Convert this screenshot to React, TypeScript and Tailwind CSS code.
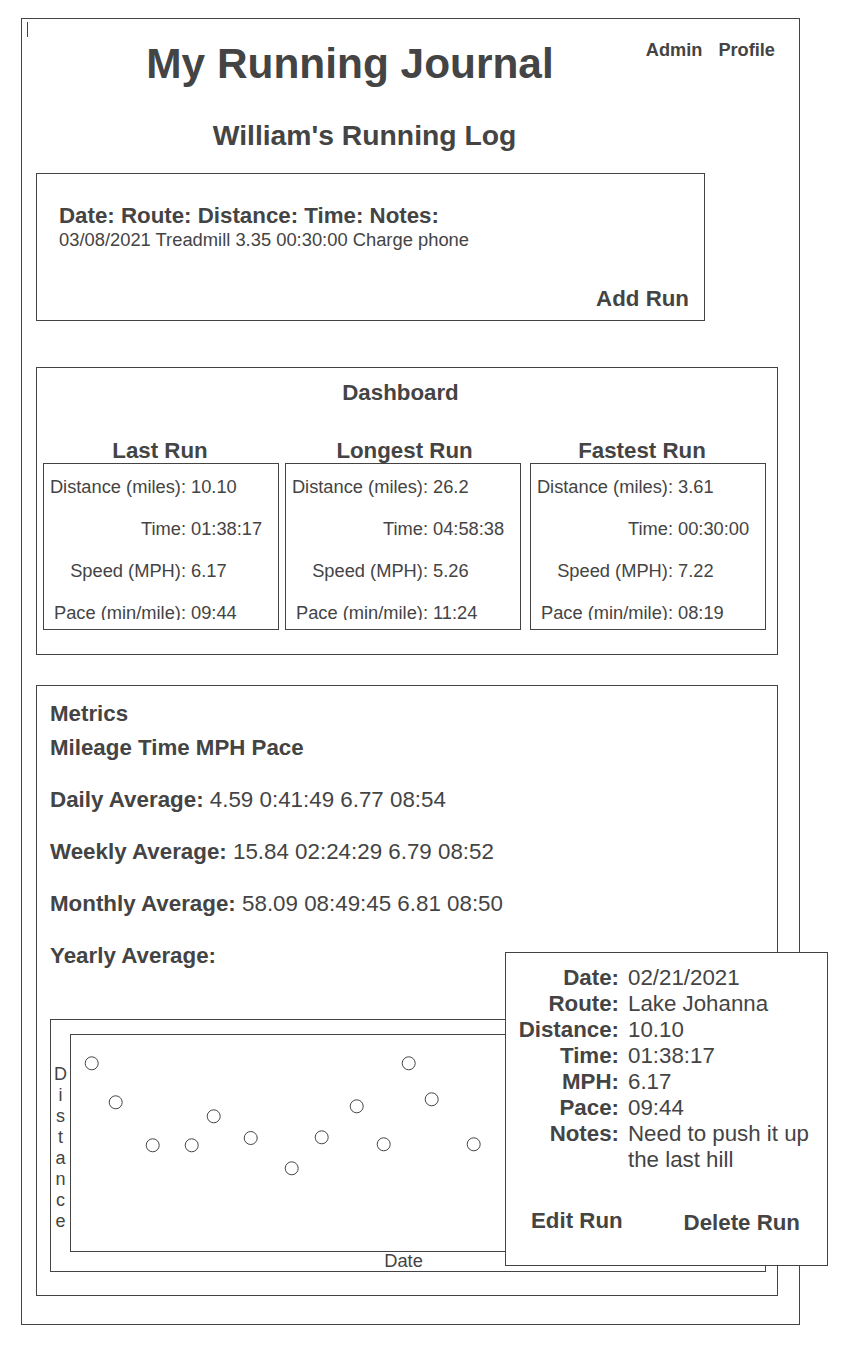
import React from 'react'

// Scatter points, relative to the plot's inner top-left corner
const points: Array<[number, number]> = [
  [20.7, 28.3],
  [44.7, 67.3],
  [81.7, 110.3],
  [120.7, 110.3],
  [142.7, 81.3],
  [179.7, 103],
  [220.7, 133.3],
  [250.7, 102.3],
  [285.7, 71.3],
  [312.7, 109.3],
  [337.7, 28.3],
  [360.7, 64.3],
  [402.7, 109.3],
]

const highlights = [
  {
    title: 'Last Run',
    headerClass: 'pr-[2px]',
    gapClass: '',
    rows: [
      ['Distance (miles):', '10.10'],
      ['Time:', '01:38:17'],
      ['Speed (MPH):', '6.17'],
      ['Pace (min/mile):', '09:44'],
    ],
  },
  {
    title: 'Longest Run',
    headerClass: 'pl-[3px]',
    gapClass: 'ml-[6px]',
    rows: [
      ['Distance (miles):', '26.2'],
      ['Time:', '04:58:38'],
      ['Speed (MPH):', '5.26'],
      ['Pace (min/mile):', '11:24'],
    ],
  },
  {
    title: 'Fastest Run',
    headerClass: 'pr-[12px]',
    gapClass: 'ml-[9px]',
    rows: [
      ['Distance (miles):', '3.61'],
      ['Time:', '00:30:00'],
      ['Speed (MPH):', '7.22'],
      ['Pace (min/mile):', '08:19'],
    ],
  },
]

const averages = [
  ['Daily Average:', '4.59 0:41:49 6.77 08:54'],
  ['Weekly Average:', '15.84 02:24:29 6.79 08:52'],
  ['Monthly Average:', '58.09 08:49:45 6.81 08:50'],
  ['Yearly Average:', ''],
]

const runDetail = [
  ['Date:', '02/21/2021'],
  ['Route:', 'Lake Johanna'],
  ['Distance:', '10.10'],
  ['Time:', '01:38:17'],
  ['MPH:', '6.17'],
  ['Pace:', '09:44'],
  ['Notes:', 'Need to push it up the last hill'],
]

function HighlightCard({ item }: { item: (typeof highlights)[number] }) {
  return (
    <div className={`flex w-[236px] flex-col ${item.gapClass}`}>
      <h3 className={`text-center text-[22.3px] font-bold leading-[24px] ${item.headerClass}`}>
        {item.title}
      </h3>
      <div className="h-[167px] border border-[#444]">
        <div className="h-[156px] overflow-hidden pt-[2px]">
          {item.rows.map(([label, value]) => (
            <div key={label} className="grid grid-cols-[142px_1fr] text-[18.3px] leading-[42px]">
              <span className="text-right whitespace-nowrap">{label}</span>
              <span className="pl-[5px] whitespace-nowrap">{value}</span>
            </div>
          ))}
        </div>
      </div>
    </div>
  )
}

export default function App() {
  return (
    <div className="min-h-screen bg-white font-['Liberation_Sans',Arial,sans-serif] text-[#444]">
      <div className="relative ml-[21px] mt-[18px] h-[1307px] w-[779px] border border-[#444]">
        {/* Cursor */}
        <div className="absolute left-[5px] top-[3px] h-[15px] w-px bg-[#444]" />

        {/* Header */}
        <div className="grid grid-cols-[600px_1fr]">
          <h1 className="mt-[21px] pl-[56px] text-center text-[42.4px] font-bold leading-[48px]">
            My Running Journal
          </h1>
          <nav className="mt-[21px] flex justify-end gap-[16px] pr-[24px] text-[18.2px] font-bold leading-[20px]">
            <span>Admin</span>
            <span>Profile</span>
          </nav>
        </div>

        <h2 className="mt-[31px] w-[685px] text-center text-[28.3px] font-bold leading-[32px]">
          William's Running Log
        </h2>

        {/* New entry */}
        <div className="ml-[14px] mt-[22px] flex h-[148px] w-[669px] flex-col border border-[#444] pb-[8px] pl-[22px] pr-[15px] pt-[29px]">
          <p className="text-[22.3px] font-bold leading-[26px]">Date: Route: Distance: Time: Notes:</p>
          <p className="text-[18.35px] leading-[22px]">03/08/2021 Treadmill 3.35 00:30:00 Charge phone</p>
          <button className="mt-auto self-end text-[22.3px] font-bold leading-[26px]">Add Run</button>
        </div>

        {/* Dashboard */}
        <div className="ml-[14px] mt-[46px] h-[288px] w-[742px] border border-[#444] pt-[12px]">
          <h3 className="pr-[13px] text-center text-[22.3px] font-bold leading-[26px]">Dashboard</h3>
          <div className="mt-[33px] flex pl-[6px]">
            {highlights.map((item) => (
              <HighlightCard key={item.title} item={item} />
            ))}
          </div>
        </div>

        {/* Metrics */}
        <div className="ml-[14px] mt-[30px] h-[611px] w-[742px] border border-[#444] pl-[13px] pt-[15px]">
          <p className="text-[22.3px] font-bold leading-[26px]">Metrics</p>
          <p className="mt-[8px] text-[22.3px] font-bold leading-[26px]">Mileage Time MPH Pace</p>
          {averages.map(([label, value]) => (
            <p key={label} className="mt-[26px] text-[22.35px] leading-[26px]">
              <span className="font-bold">{label}</span> {value}
            </p>
          ))}

          {/* Chart */}
          <div className="mt-[50px] h-[253px] w-[716px] border border-[#444] pt-[14px]">
            <div className="flex">
              <div className="flex w-[19px] flex-col items-center justify-center pt-[9px] text-[18px] leading-[21px]">
                {'Distance'.split('').map((ch, i) => (
                  <span key={i}>{ch}</span>
                ))}
              </div>
              <div className="h-[218px] w-[676px] border border-[#444]">
                <svg className="h-full w-full" viewBox="0 0 674 216">
                  {points.map(([cx, cy], i) => (
                    <circle key={i} cx={cx} cy={cy} r={6.5} fill="none" stroke="#444" strokeWidth={1} />
                  ))}
                </svg>
              </div>
            </div>
            <p className="pr-[9px] text-center text-[18.3px] leading-[18px]">Date</p>
          </div>
        </div>

        {/* Run detail popover */}
        <div className="absolute left-[483px] top-[933px] flex h-[314px] w-[323px] flex-col border border-[#444] bg-white pt-[12px]">
          <div className="grid grid-cols-[113px_1fr] gap-x-[9px] pr-[10px] text-[22.3px] leading-[26px]">
            {runDetail.map(([label, value]) => (
              <React.Fragment key={label}>
                <span className="text-right font-bold">{label}</span>
                <span>{value}</span>
              </React.Fragment>
            ))}
          </div>
          <div className="mt-[35px] flex items-start justify-between pl-[25px] pr-[27px] text-[22.3px] font-bold leading-[26px]">
            <button>Edit Run</button>
            <button className="mt-[2px]">Delete Run</button>
          </div>
        </div>
      </div>
    </div>
  )
}
